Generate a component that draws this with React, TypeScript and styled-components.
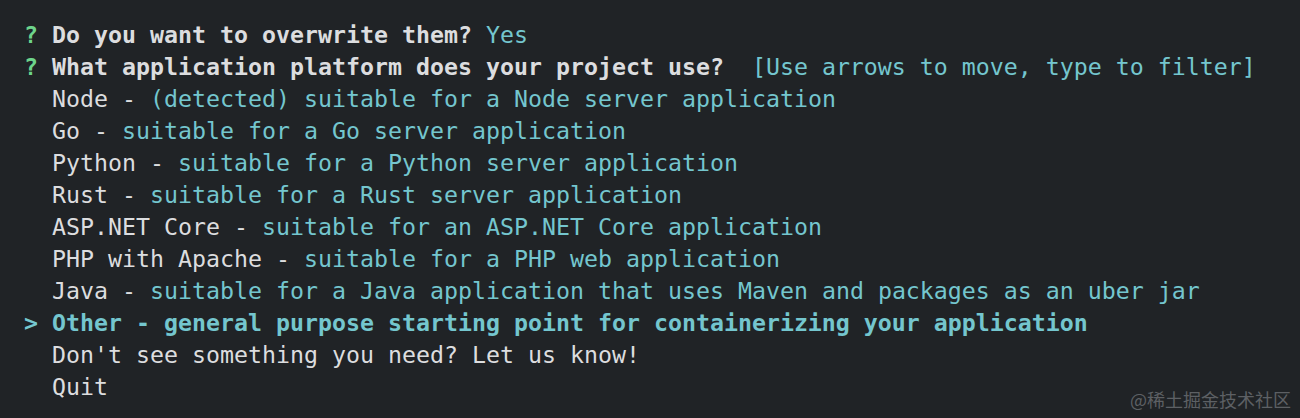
import React from "react";
import styled, { createGlobalStyle } from "styled-components";

const Global = createGlobalStyle`
  html, body { margin: 0; padding: 0; background: #202326; }
  body { width: 1300px; height: 418px; overflow: hidden; }
`;

const Terminal = styled.div`
  position: relative;
  box-sizing: border-box;
  width: 1300px;
  height: 418px;
  background: #202326;
  padding: 19px 0 0 24px;
  font-family: "DejaVu Sans Mono", "Liberation Mono", monospace;
  font-size: 23.25px;
  line-height: 32px;
  color: #dcdddf;
  white-space: pre;
`;

const Line = styled.div`
  display: flex;
  height: 32px;
`;

const Prefix = styled.span<{ $tone: "green" | "cyan" | "none" }>`
  display: inline-block;
  width: 28px;
  font-weight: 700;
  color: ${(p) => (p.$tone === "green" ? "#6dd48b" : p.$tone === "cyan" ? "#76c8d0" : "inherit")};
`;

const Text = styled.span<{ $bold?: boolean; $tone?: "cyan" | "white" }>`
  font-weight: ${(p) => (p.$bold ? 700 : 400)};
  color: ${(p) => (p.$tone === "cyan" ? "#74c6ce" : "#dcdddf")};
`;

const Watermark = styled.div`
  position: absolute;
  right: 9px;
  bottom: 9px;
  font-family: "Noto Sans CJK SC", "Noto Sans", sans-serif;
  font-size: 18px;
  letter-spacing: 0px;
  line-height: 20px;
  color: #5d6064;
  white-space: nowrap;
`;

const options: { name: string; desc: string }[] = [
  { name: "Node", desc: "(detected) suitable for a Node server application" },
  { name: "Go", desc: "suitable for a Go server application" },
  { name: "Python", desc: "suitable for a Python server application" },
  { name: "Rust", desc: "suitable for a Rust server application" },
  { name: "ASP.NET Core", desc: "suitable for an ASP.NET Core application" },
  { name: "PHP with Apache", desc: "suitable for a PHP web application" },
  { name: "Java", desc: "suitable for a Java application that uses Maven and packages as an uber jar" },
];

export default function App() {
  return (
    <>
      <Global />
      <Terminal>
        <Line>
          <Prefix $tone="green">?</Prefix>
          <Text $bold>Do you want to overwrite them? </Text>
          <Text $tone="cyan">Yes</Text>
        </Line>
        <Line>
          <Prefix $tone="green">?</Prefix>
          <Text $bold>What application platform does your project use?  </Text>
          <Text $tone="cyan">[Use arrows to move, type to filter]</Text>
        </Line>
        {options.map((o) => (
          <Line key={o.name}>
            <Prefix $tone="none"> </Prefix>
            <Text>{o.name} - </Text>
            <Text $tone="cyan">{o.desc}</Text>
          </Line>
        ))}
        <Line>
          <Prefix $tone="cyan">&gt;</Prefix>
          <Text $bold $tone="cyan">Other - general purpose starting point for containerizing your application</Text>
        </Line>
        <Line>
          <Prefix $tone="none"> </Prefix>
          <Text>Don't see something you need? Let us know!</Text>
        </Line>
        <Line>
          <Prefix $tone="none"> </Prefix>
          <Text>Quit</Text>
        </Line>
        <Watermark>@稀土掘金技术社区</Watermark>
      </Terminal>
    </>
  );
}
